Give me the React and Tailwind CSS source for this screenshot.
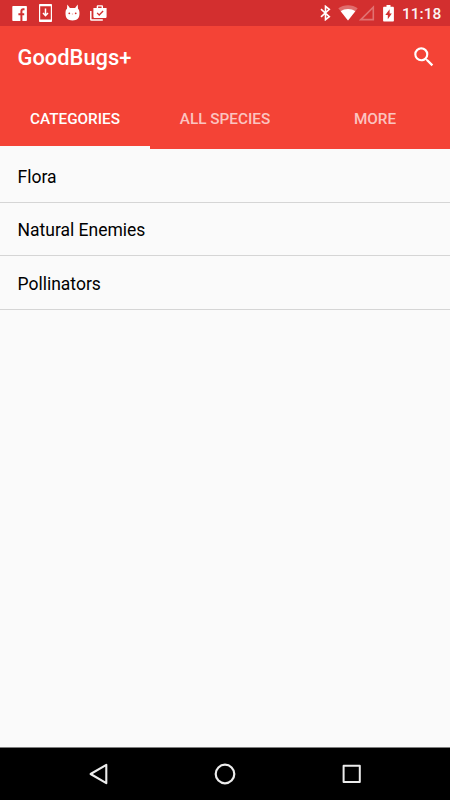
import { useState } from 'react';

const TABS = ['CATEGORIES', 'ALL SPECIES', 'MORE'];
const CATEGORIES = ['Flora', 'Natural Enemies', 'Pollinators'];

function FacebookIcon() {
  return (
    <svg viewBox="0 0 15 15" className="w-[15px] h-[15px]">
      <rect x="0.3" width="14.600" height="15" rx="0.800" fill="currentColor" />
      <path d="M9.400 15V5.200c0-1.300.6-1.900 1.800-1.900h1.300M6.400 8.200h5.800" fill="none" className="stroke-[#d32f2f]" strokeWidth="2" />
    </svg>
  );
}

function DownloadIcon() {
  return (
    <svg viewBox="0 0 13 18" className="w-[13px] h-[18px]">
      <path d="M0 .8C0 .3.3 0 .8 0h11.400c.5 0 .8.3.8.8v16.400c0 .5-.3.8-.8.8H.8c-.5 0-.8-.3-.8-.8zM1.200 2.200v13.200h10.600V2.200z" fill="currentColor" fillRule="evenodd" />
      <path d="M6.500 4.400v7M4 9.100l2.500 2.600L9 9.100" fill="none" stroke="currentColor" strokeWidth="1.500" />
    </svg>
  );
}

function CatIcon() {
  return (
    <svg viewBox="0 0 15 17" className="w-[15px] h-[17px]">
      <path d="M2.300.4 4.900 4h5.200L12.700.4l.3 4.300c1.100.8 1.500 2 1.500 4.600 0 4.900-2.200 7.100-7 7.100s-7-2.200-7-7.100c0-2.600.4-3.800 1.500-4.600z" fill="currentColor" />
      <circle cx="4.300" cy="9.300" r="0.900" className="fill-[#d32f2f]" />
      <circle cx="10.700" cy="9.300" r="0.900" className="fill-[#d32f2f]" />
      <path d="M6.900 10h1.200" className="stroke-[#e88383]" strokeWidth="0.8" />
    </svg>
  );
}

function WorkIcon() {
  return (
    <svg viewBox="0 0 17 16" className="w-[17px] h-[16px]">
      <path d="M.8 6v8.400c0 .4.3.7.7.7h11.300" fill="none" stroke="currentColor" strokeWidth="1.500" />
      <path d="M3.400 3h3.300V1.500C6.700.8 7.200.3 7.900.3h3.900c.7 0 1.200.5 1.200 1.200V3h3.600v8.700c0 .8-.6 1.300-1.300 1.300H4.700c-.7 0-1.300-.5-1.300-1.300zM8.100 3h3.500V1.600H8.100z" fill="currentColor" fillRule="evenodd" />
      <path d="M7.100 7.900 9.200 10l3.900-4" fill="none" className="stroke-[#d32f2f]" strokeWidth="1.300" />
    </svg>
  );
}

function BluetoothIcon() {
  return (
    <svg viewBox="0 0 11 16" className="w-[11px] h-[16px]" fill="none" stroke="currentColor" strokeWidth="1.600">
      <path d="m1 4.200 8.300 7.500-3.800 3V1.300l3.800 3L1 11.800" />
    </svg>
  );
}

function WifiIcon() {
  return (
    <svg viewBox="0 0 20 16" className="w-[20px] h-[16px]" fill="currentColor">
      <path d="M10 15.600.3 3.300C3.100 1.300 6.400.3 10 .3s6.900 1 9.700 3z" opacity="0.3" />
      <path d="M10 15.600 2.700 6.300C4.800 4.800 7.300 4 10 4s5.200.8 7.300 2.300z" />
    </svg>
  );
}

function SignalIcon() {
  return (
    <svg viewBox="0 0 16 16" className="w-[16px] h-[16px]" fill="none">
      <path d="M14.300 2.200v12.400H1.900z" stroke="currentColor" strokeWidth="1.600" opacity="0.32" />
    </svg>
  );
}

function BatteryIcon() {
  return (
    <svg viewBox="0 0 11 17" className="w-[11px] h-[17px]">
      <path d="M3.500 0h4v1.700h2.300c.7 0 1.100.4 1.100 1.100v12.600c0 .7-.4 1.200-1.100 1.200H1.200c-.7 0-1.100-.5-1.100-1.200V2.800c0-.7.4-1.100 1.100-1.100h2.300z" fill="currentColor" />
      <path d="M6.600 4.200 2.300 10h2.500v4.200L8.800 8.500H6.600z" className="fill-[#d32f2f]" />
    </svg>
  );
}

function SearchIcon() {
  return (
    <svg viewBox="0 0 24 24" className="w-[26px] h-[26px]" fill="currentColor">
      <path d="M15.5 14h-.79l-.28-.27A6.471 6.471 0 0 0 16 9.500 6.500 6.500 0 1 0 9.500 16c1.610 0 3.090-.59 4.230-1.570l.27.28v.79l5 4.990L20.490 19l-4.990-5zm-6 0C7.010 14 5 11.990 5 9.500S7.010 5 9.500 5 14 7.010 14 9.500 11.990 14 9.500 14z" />
    </svg>
  );
}

function StatusBar() {
  return (
    <div className="h-[26px] bg-[#d32f2f] flex justify-between items-center">
      <div className="flex items-center h-full pl-[12px]">
        <FacebookIcon />
        <div className="ml-[12px]"><DownloadIcon /></div>
        <div className="ml-[13px] pb-[2px]"><CatIcon /></div>
        <div className="ml-[10px]"><WorkIcon /></div>
      </div>
      <div className="flex items-center h-full pr-[9px]">
        <BluetoothIcon />
        <div className="ml-[7px]"><WifiIcon /></div>
        <div className="ml-[1px]"><SignalIcon /></div>
        <div className="ml-[8px]"><BatteryIcon /></div>
        <span className="ml-[8px] w-[39px] text-[15.5px] leading-[26px] font-medium text-white/95 whitespace-nowrap pt-px">11:18</span>
      </div>
    </div>
  );
}

function NavBar() {
  return (
    <nav className="h-[53px] bg-black border-t border-[#7d7d7d] flex items-center text-[#ececec]">
      <button className="ml-[88px]">
        <svg viewBox="0 0 22 22" className="w-[22px] h-[22px]" fill="none" stroke="currentColor" strokeWidth="2.100" strokeLinejoin="round">
          <path d="M18.300 1.800v18.400L2.600 11z" />
        </svg>
      </button>
      <button className="ml-[104px]">
        <svg viewBox="0 0 22 22" className="w-[22px] h-[22px]" fill="none" stroke="currentColor" strokeWidth="2.200">
          <circle cx="11" cy="11" r="9.300" />
        </svg>
      </button>
      <button className="ml-[105px]">
        <svg viewBox="0 0 22 22" className="w-[22px] h-[22px]" fill="none" stroke="currentColor" strokeWidth="2" strokeLinejoin="round">
          <path d="M2.600 2.800h16.200v16.200H2.600z" />
        </svg>
      </button>
    </nav>
  );
}

export default function App() {
  const [activeTab, setActiveTab] = useState('CATEGORIES');

  return (
    <div className="w-[450px] h-[800px] flex flex-col overflow-hidden bg-[#fafafa] text-white font-[Roboto,sans-serif]">
      <StatusBar />

      {/* Toolbar + tabs */}
      <header className="bg-[#f44336]">
        <div className="h-[61px] flex items-center justify-between pl-[17.5px] pr-[13px]">
          <h1 className="text-[21.9px] font-medium pt-[4px]">GoodBugs+</h1>
          <button>
            <SearchIcon />
          </button>
        </div>
        <div className="grid grid-cols-3 h-[62px]">
          {TABS.map((tab) => (
            <button
              key={tab}
              onClick={() => setActiveTab(tab)}
              className={`border-b-[3px] text-[15.3px] font-medium pt-[5px] ${
                activeTab === tab ? 'border-[#fafafa] text-white' : 'border-transparent text-white/70'
              }`}
            >
              {tab}
            </button>
          ))}
        </div>
      </header>

      {/* Category list */}
      <ul className="flex-1">
        {CATEGORIES.map((name) => (
          <li
            key={name}
            className="h-[53.6px] flex items-center border-b border-[#d5d5d5] pl-[17.5px] pt-[2.8px] text-[17.5px] text-black"
          >
            {name}
          </li>
        ))}
      </ul>

      <NavBar />
    </div>
  );
}
